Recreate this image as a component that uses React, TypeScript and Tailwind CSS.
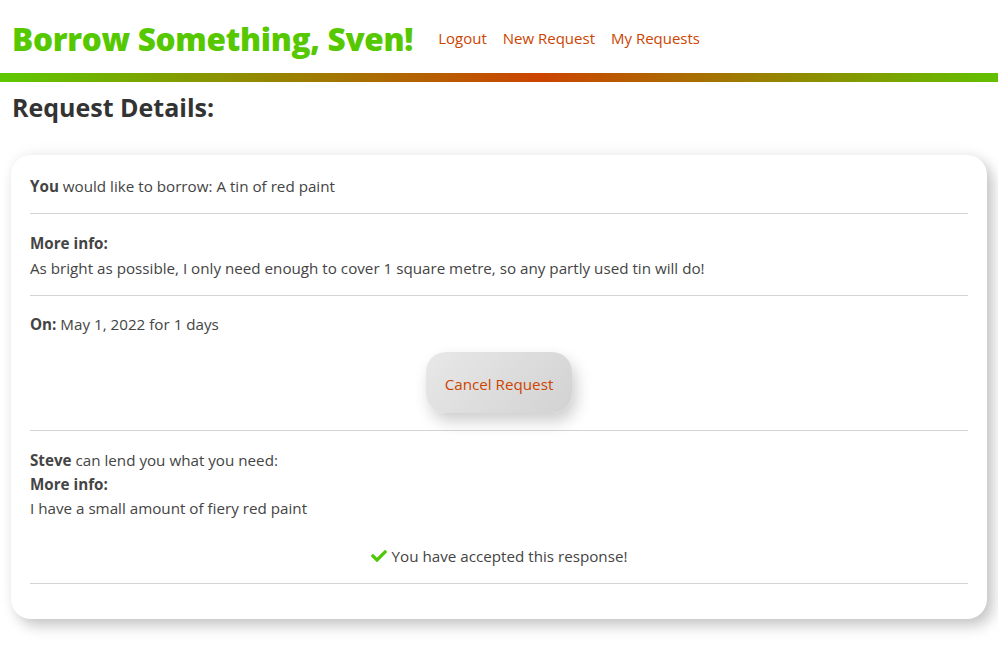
import React from "react";
import { FaCheck } from "react-icons/fa";

const font = { fontFamily: '"Open Sans", "Liberation Sans", sans-serif' };

function Divider() {
  return <div className="h-px bg-[#d4d4d4]" />;
}

export default function App() {
  return (
    <div className="min-h-[657px] bg-white text-[#444] text-[15.2px]" style={font}>
      <header className="flex items-center h-[73px] pl-3 gap-[25px]">
        <h1 className="text-[31.5px] font-extrabold text-[#55c800] tracking-[-0.3px] pt-[5px]">
          Borrow Something, Sven!
        </h1>
        <nav className="flex gap-4 text-[15px] text-[#cc4400] pt-[3px]">
          <a href="#">Logout</a>
          <a href="#">New Request</a>
          <a href="#">My Requests</a>
        </nav>
      </header>
      <div className="h-[9px] bg-[linear-gradient(to_right,#5ec800,#cc4400_54%,#62c000)]" />
      <h2 className="px-3 pt-[8px] text-[25px] font-bold text-[#333] leading-[34px]">
        Request Details:
      </h2>
      <div className="mx-[11px] mt-[31px] rounded-[20px] bg-white px-[19px] pb-[35px] shadow-[6px_7px_14px_rgba(0,0,0,0.22),0_-4px_14px_rgba(0,0,0,0.04)]">
        <p className="pt-[20px] pb-[15px]">
          <b>You</b> would like to borrow: A tin of red paint
        </p>
        <Divider />
        <div className="pt-[17px] pb-[14px] leading-[25px]">
          <b>More info:</b>
          <p>
            As bright as possible, I only need enough to cover 1 square metre, so any
            partly used tin will do!
          </p>
        </div>
        <Divider />
        <p className="pt-[17px]">
          <b>On:</b> May 1, 2022 for 1 days
        </p>
        <div className="flex justify-center pt-[16px] pb-[17px]">
          <button className="w-[146px] h-[61px] pt-[4px] rounded-[20px] bg-[linear-gradient(135deg,#e8e8e8,#d2d2d2)] text-[#cc4400] shadow-[4px_8px_16px_rgba(0,0,0,0.2)]">
            Cancel Request
          </button>
        </div>
        <Divider />
        <div className="pt-[17px] leading-[24px]">
          <p>
            <b>Steve</b> can lend you what you need:
          </p>
          <b>More info:</b>
          <p>I have a small amount of fiery red paint</p>
        </div>
        <p className="flex items-center justify-center gap-[5px] pt-[25px] pb-[16px]">
          <FaCheck className="text-[#4cc800]" size={16} />
          You have accepted this response!
        </p>
        <Divider />
      </div>
    </div>
  );
}
